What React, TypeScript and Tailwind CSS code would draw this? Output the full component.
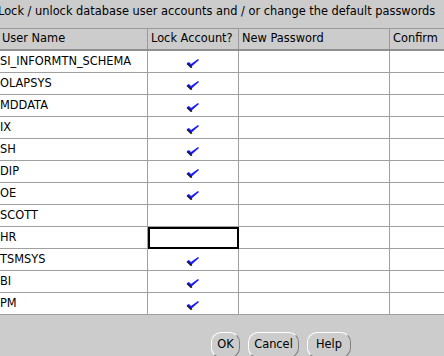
import React from "react";

const rows: { name: string; locked: boolean; focus?: boolean }[] = [
  { name: "SI_INFORMTN_SCHEMA", locked: true },
  { name: "OLAPSYS", locked: true },
  { name: "MDDATA", locked: true },
  { name: "IX", locked: true },
  { name: "SH", locked: true },
  { name: "DIP", locked: true },
  { name: "OE", locked: true },
  { name: "SCOTT", locked: false },
  { name: "HR", locked: false, focus: true },
  { name: "TSMSYS", locked: true },
  { name: "BI", locked: true },
  { name: "PM", locked: true },
];

function Check() {
  return (
    <svg width="14" height="10" viewBox="0 0 14 10" className="mt-[2px]">
      <polygon points="1,5 3,4 5,6 12,1 13,2 5,9" fill="#1a1aff" />
      <polyline points="1,5.5 5,9.3 6,8.6" fill="none" stroke="#101030" strokeWidth="1.4" />
    </svg>
  );
}

export default function App() {
  return (
    <div
      className="w-[444px] h-[356px] overflow-hidden bg-[#cccccc] text-[11.4px] text-black"
      style={{ fontFamily: '"DejaVu Sans", sans-serif' }}
    >
      <div className="h-[28px] flex items-center ml-[-2px] whitespace-nowrap pb-[4px]">
        Lock / unlock database user accounts and / or change the default passwords
      </div>
      <div className="w-[520px]">
        <div className="flex h-[23px] border-t border-[#999999] bg-[#cccccc] border-b-[2px] border-b-[#8f8f8f] whitespace-nowrap">
          <div className="w-[148px] border-r border-[#999999] pl-[2px] flex items-center">User Name</div>
          <div className="w-[91px] border-r border-[#999999] pl-[3px] flex items-center">Lock Account?</div>
          <div className="w-[151px] border-r border-[#999999] pl-[3px] flex items-center">New Password</div>
          <div className="flex-1 pl-[3px] flex items-center">Confirm</div>
        </div>
        <div className="bg-white">
          {rows.map((r) => (
            <div key={r.name} className="flex h-[22px] border-b border-[#a0a0a0] whitespace-nowrap">
              <div className="w-[148px] border-r border-[#a0a0a0] flex items-center pt-[1px]">{r.name}</div>
              <div className="relative w-[91px] border-r border-[#a0a0a0] flex items-center justify-center">
                {r.locked && <Check />}
                {r.focus && (
                  <div className="absolute top-0 bottom-[-1px] left-0 right-[-1px] border-2 border-black" />
                )}
              </div>
              <div className="w-[151px] border-r border-[#a0a0a0]" />
              <div className="flex-1" />
            </div>
          ))}
        </div>
      </div>
      <div className="flex pl-[211px] pt-[17px] gap-[8px]">
        <div className="w-[29px] h-[26px] rounded-[10px] border border-t-white border-l-white border-r-[#808080] border-b-[#808080] flex items-center justify-center">OK</div>
        <div className="w-[51px] h-[26px] rounded-[10px] border border-t-white border-l-white border-r-[#808080] border-b-[#808080] flex items-center justify-center">Cancel</div>
        <div className="w-[44px] h-[26px] rounded-[10px] border border-t-white border-l-white border-r-[#808080] border-b-[#808080] flex items-center justify-center">Help</div>
      </div>
    </div>
  );
}
